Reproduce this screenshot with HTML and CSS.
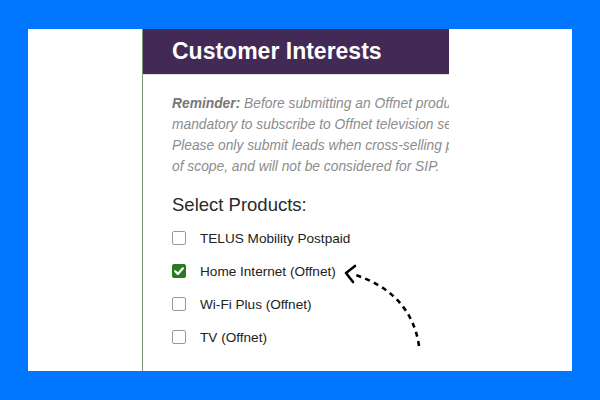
FILE: index.html
```html
<!DOCTYPE html>
<html>
<head>
<meta charset="utf-8">
<link rel="stylesheet" href="styles.css">
</head>
<body>
<div class="frame">
  <section class="card">
    <header class="card-head">Customer Interests</header>
    <div class="card-body">
      <p class="reminder">
        <span class="line"><b>Reminder:</b> Before submitting an Offnet product lead, please note that it is</span>
        <span class="line">mandatory to subscribe to Offnet television services with the customer.</span>
        <span class="line">Please only submit leads when cross-selling products; other leads are out</span>
        <span class="line">of scope, and will not be considered for SIP.</span>
      </p>
      <h2 class="select-title">Select Products:</h2>
      <ul class="products">
        <li class="product"><span class="box"></span><span>TELUS Mobility Postpaid</span></li>
        <li class="product"><span class="box checked"><svg viewBox="0 0 14 14" width="14" height="14"><path d="M3.2 7.2 L5.9 9.9 L10.9 4.3" fill="none" stroke="#fff" stroke-width="2.2" stroke-linecap="round" stroke-linejoin="round"/></svg></span><span>Home Internet (Offnet)</span></li>
        <li class="product"><span class="box"></span><span>Wi-Fi Plus (Offnet)</span></li>
        <li class="product"><span class="box"></span><span>TV (Offnet)</span></li>
      </ul>
    </div>
  </section>
</div>
<svg class="arrow" width="600" height="400" viewBox="0 0 600 400">
  <path d="M419 346 C414 310 390 285 352 274" fill="none" stroke="#000" stroke-width="2.6" stroke-dasharray="5 4.5"/>
  <polyline points="355,266 346,273 353,282" fill="none" stroke="#000" stroke-width="2.6" stroke-linecap="round" stroke-linejoin="round"/>
</svg>
</body>
</html>
```
FILE: styles.css
```css
html, body {
  margin: 0;
  padding: 0;
}
body {
  position: relative;
  width: 600px;
  height: 400px;
  background: #0077fe;
  padding-top: 29px;
  box-sizing: border-box;
  font-family: "Liberation Sans", Arial, sans-serif;
  overflow: hidden;
}
.frame {
  margin-left: 28px;
  width: 544px;
  height: 342px;
  background: #fff;
  overflow: hidden;
  display: flex;
}
.card {
  margin-left: 114px;
  width: 306px;
  flex: none;
  border-left: 1px solid #7f9a72;
  overflow: hidden;
  background: #fff;
}
.card-head {
  height: 45px;
  background: #432a56;
  border-bottom: 1px solid #dcdcdc;
  color: #fff;
  font-weight: bold;
  font-size: 23px;
  line-height: 45px;
  padding-left: 29px;
  white-space: nowrap;
}
.card-body {
  padding: 18px 0 0 29px;
}
.reminder {
  margin: 0;
  font-style: italic;
  font-size: 13.8px;
  line-height: 21px;
  color: #8c8c8c;
}
.reminder b {
  color: #777;
}
.line {
  display: block;
  white-space: nowrap;
}
.select-title {
  margin: 17px 0 0 0;
  font-weight: normal;
  font-size: 18.5px;
  line-height: 22px;
  color: #2a2a2a;
}
.products {
  list-style: none;
  margin: 12px 0 0 0;
  padding: 0;
  display: flex;
  flex-direction: column;
  gap: 13px;
}
.product {
  display: flex;
  align-items: center;
  gap: 14px;
  height: 20px;
  font-size: 13.6px;
  color: #222;
  white-space: nowrap;
}
.box {
  width: 14px;
  height: 14px;
  box-sizing: border-box;
  border: 1.5px solid #9a9a9a;
  border-radius: 2px;
  flex: none;
  display: flex;
}
.box.checked {
  background: #2a7a23;
  border-color: #2a7a23;
}
.box.checked svg {
  margin: -1.5px;
}
.arrow {
  position: absolute;
  left: 0;
  top: 0;
}
```
